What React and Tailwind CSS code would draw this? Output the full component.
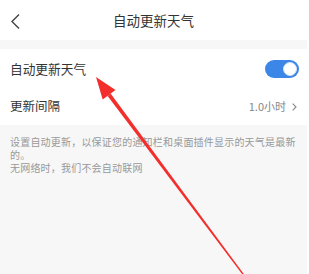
export default function App() {
  return (
    <div
      className="relative w-[309px] h-[274px] overflow-hidden bg-white"
      style={{ fontFamily: '"Noto Sans CJK SC", "Noto Sans", sans-serif' }}
    >
      <div className="w-[307px] h-full flex flex-col bg-[#f7f7f7]">
        {/* header */}
        <div className="h-[40px] bg-white flex items-center relative">
          <svg className="absolute left-[10px] top-[13px]" width="11" height="17" viewBox="0 0 11 17">
            <path d="M9 1.5 L2 8.5 L9 15.5" fill="none" stroke="#444" strokeWidth="1.4" />
          </svg>
          <div className="w-full text-center text-[13.5px] text-[#333] leading-none pt-[1px]">
            自动更新天气
          </div>
        </div>
        <div className="h-[9px]" />

        {/* settings rows */}
        <div className="bg-white">
          <div className="h-[39px] flex items-center justify-between pl-[10px] pr-[8px]">
            <span className="text-[12.7px] text-[#333]">自动更新天气</span>
            <div className="w-[34px] h-[18px] rounded-full bg-[#3c86e8] flex items-center justify-end pr-[2px]">
              <div className="w-[14px] h-[14px] rounded-full bg-white border border-[#cfe0f7]" />
            </div>
          </div>
          <div className="h-[37px] flex items-center justify-between pl-[10px] pr-[10px]">
            <span className="text-[12.5px] text-[#333]">更新间隔</span>
            <div className="flex items-center gap-[6px] text-[11px] text-[#888]">
              <span>1.0小时</span>
              <svg width="5" height="8" viewBox="0 0 5 8">
                <path d="M0.7 0.7 L4 4 L0.7 7.3" fill="none" stroke="#888" strokeWidth="1.1" />
              </svg>
            </div>
          </div>
        </div>

        {/* description */}
        <div className="pl-[10px] pr-[10px] pt-[10px] text-[10px] leading-[13px] text-[#999] tracking-[0.2px]">
          <p>设置自动更新，以保证您的通知栏和桌面插件显示的天气是最新的。</p>
          <p>无网络时，我们不会自动联网</p>
        </div>
      </div>

      {/* annotation arrow */}
      <svg className="absolute left-0 top-0" width="309" height="274" viewBox="0 0 309 274">
        <polygon points="96,77 115.5,89.9 102.7,99.5" fill="#f22f2c" />
        <polygon points="110.6,93.4 107.6,95.9 242.5,274.6 243.6,273.7" fill="#f22f2c" />
      </svg>
    </div>
  );
}
